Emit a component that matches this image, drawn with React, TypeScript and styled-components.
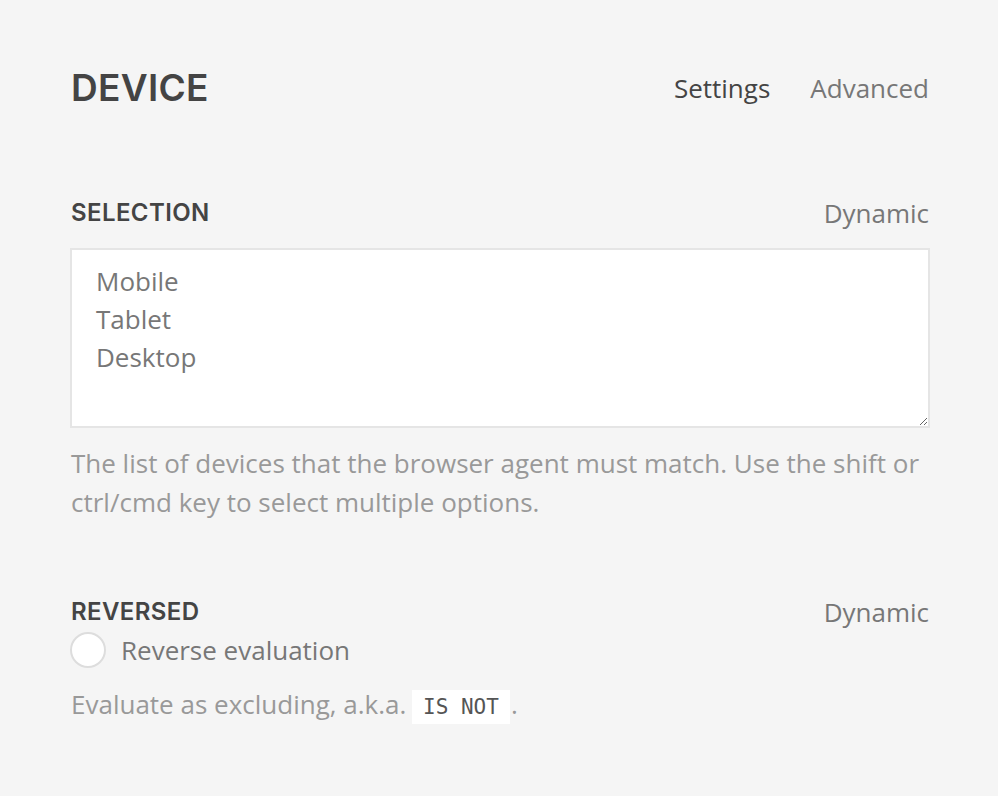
import React from "react";
import styled, { createGlobalStyle } from "styled-components";

const Global = createGlobalStyle`
  html, body { margin: 0; padding: 0; background: #f5f5f5; }
  body { font-family: "Open Sans", "Liberation Sans", sans-serif; }
`;

const Page = styled.div`
  padding: 63px 69px 40px 71px;
  box-sizing: border-box;
  width: 998px;
`;

const Header = styled.header`
  display: flex;
  align-items: center;
  justify-content: space-between;
  height: 50px;
`;

const Title = styled.h1`
  margin: 0;
  font-family: "Inter", "Liberation Sans", sans-serif;
  font-weight: 600;
  font-size: 37px;
  letter-spacing: 0.3px;
  color: #444;
  line-height: 50px;
`;

const Tabs = styled.nav`
  display: flex;
  gap: 40px;
`;

const Tab = styled.span<{ $active?: boolean }>`
  font-size: 26px;
  color: ${(p) => (p.$active ? "#444" : "#777")};
  line-height: 50px;
`;

const Section = styled.section<{ $top: number }>`
  margin-top: ${(p) => p.$top}px;
`;

const SectionHead = styled.div`
  display: flex;
  align-items: center;
  justify-content: space-between;
  height: 30px;
`;

const Label = styled.h2`
  margin: 0;
  font-family: "Inter", "Liberation Sans", sans-serif;
  font-weight: 600;
  font-size: 24px;
  letter-spacing: 0.4px;
  line-height: 30px;
  color: #444;
`;

const Dynamic = styled.span`
  font-size: 26px;
  line-height: 30px;
  color: #777;
`;

const Box = styled.textarea`
  display: block;
  box-sizing: border-box;
  width: 860px;
  height: 180px;
  margin-top: 20px;
  margin-left: -1px;
  border: 2px solid #e5e5e5;
  background: #fff;
  padding: 12px 24px;
  font-family: "Open Sans", "Liberation Sans", sans-serif;
  font-size: 26px;
  line-height: 38px;
  color: #777;
  outline: none;
  resize: vertical;
`;

const Help = styled.p<{ $top: number }>`
  margin: ${(p) => p.$top}px 0 0;
  font-size: 26px;
  line-height: 39px;
  color: #999;
`;

const Toggle = styled.label`
  display: flex;
  align-items: center;
  gap: 15px;
  margin-top: 5px;
  margin-left: -1px;
  height: 36px;
`;

const Circle = styled.span`
  width: 36px;
  height: 36px;
  box-sizing: border-box;
  border-radius: 50%;
  border: 2px solid #ddd;
  background: #fff;
`;

const ToggleText = styled.span`
  font-size: 26px;
  color: #777;
`;

const Code = styled.code`
  font-family: "DejaVu Sans Mono", "Liberation Mono", monospace;
  font-size: 21px;
  color: #555;
  background: #fff;
  padding: 5px 11px;
  margin: 0 1px 0 -1px;
`;

export default function App() {
  return (
    <>
      <Global />
      <Page>
        <Header>
          <Title>DEVICE</Title>
          <Tabs>
            <Tab $active>Settings</Tab>
            <Tab>Advanced</Tab>
          </Tabs>
        </Header>
        <Section $top={85}>
          <SectionHead>
            <Label>SELECTION</Label>
            <Dynamic>Dynamic</Dynamic>
          </SectionHead>
          <Box readOnly value={"Mobile\nTablet\nDesktop"} />
          <Help $top={16}>
            The list of devices that the browser agent must match. Use the shift or ctrl/cmd key to select multiple options.
          </Help>
        </Section>
        <Section $top={75}>
          <SectionHead>
            <Label>REVERSED</Label>
            <Dynamic>Dynamic</Dynamic>
          </SectionHead>
          <Toggle>
            <Circle />
            <ToggleText>Reverse evaluation</ToggleText>
          </Toggle>
          <Help $top={17}>
            Evaluate as excluding, a.k.a. <Code>IS NOT</Code>.
          </Help>
        </Section>
      </Page>
    </>
  );
}
